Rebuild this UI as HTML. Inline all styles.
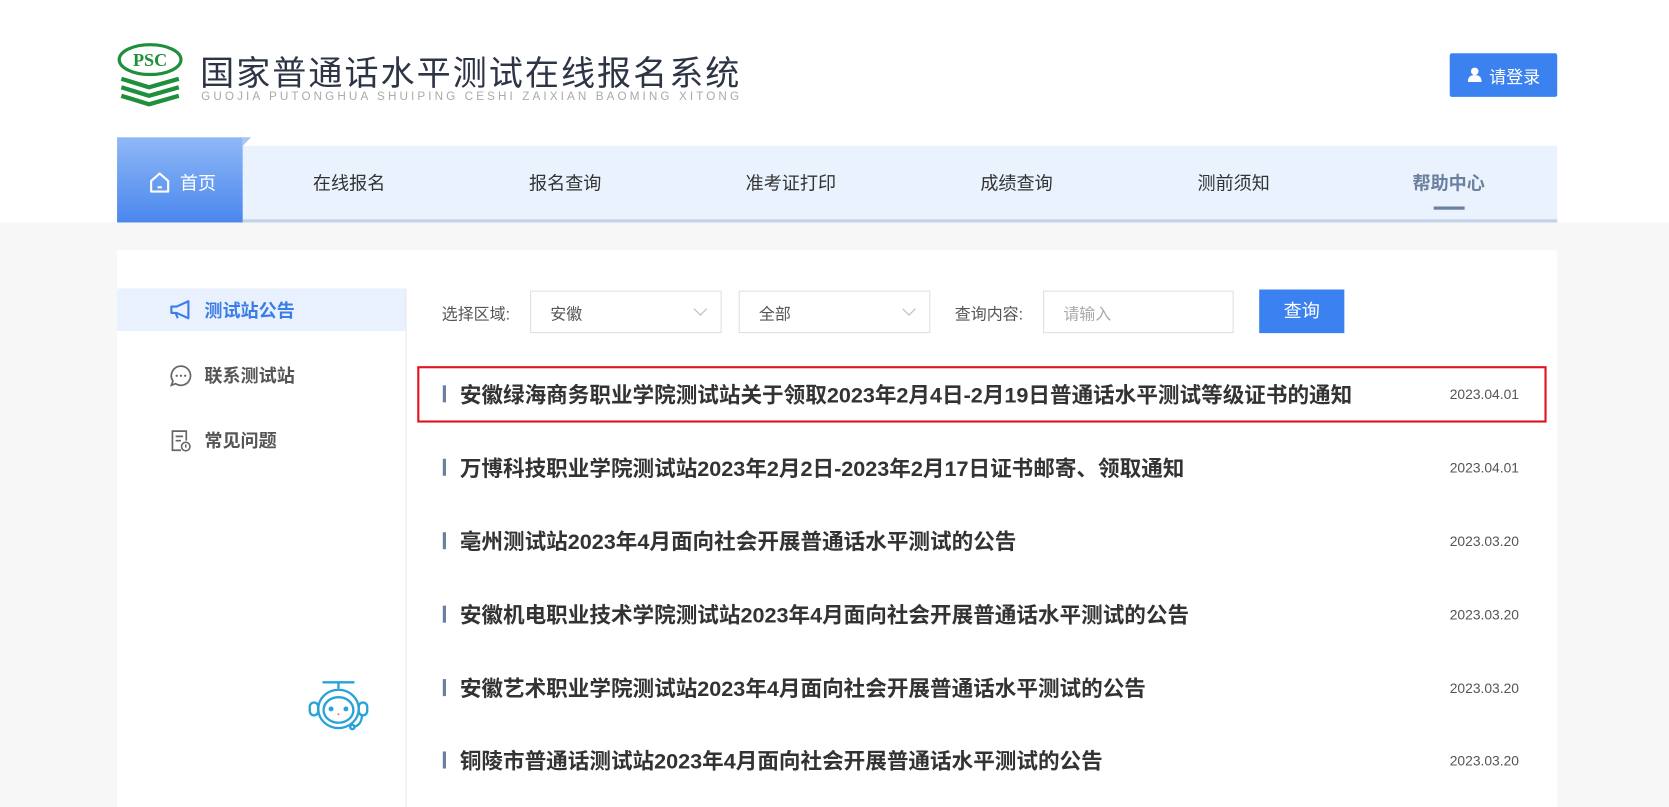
<!DOCTYPE html>
<html><head><meta charset="utf-8"><style>
*{margin:0;padding:0;box-sizing:border-box}
html,body{width:1669px;height:807px;overflow:hidden;background:#fff}
#s{position:absolute;left:0;top:0;width:1568px;height:758px;transform:scale(1.06441);transform-origin:0 0;font-family:"Liberation Sans","Noto Sans CJK SC",sans-serif;}
.a{position:absolute}
.nav span{position:absolute;top:158px;font-size:17px;color:#333;transform:translateX(-50%);white-space:nowrap}
.it{position:absolute;left:416px;width:1030px;height:20px}
.it .b{position:absolute;left:0;top:2px;width:3px;height:16px;background:#6b7fa0}
.it .t{position:absolute;left:16px;top:-6px;font-size:20.3px;font-weight:bold;color:#333;white-space:nowrap}
.it .d{position:absolute;left:946px;top:3px;font-size:13px;color:#555}
.sel{position:absolute;top:273px;height:40px;border:1px solid #dcdfe6;background:#fff;font-size:15px;color:#555;padding:10px 0 0 18px}
</style></head><body><div id="s">
<svg class="a" style="left:110px;top:40px" width="62" height="60" viewBox="0 0 62 60">
<ellipse cx="31" cy="16" rx="29" ry="14" fill="none" stroke="#1e8f3a" stroke-width="3"/>
<text x="31" y="22" text-anchor="middle" font-family="Liberation Serif" font-weight="bold" font-size="17" fill="#1e8f3a">PSC</text>
<g stroke="#1e8f3a" stroke-width="4" fill="none"><path d="M4 34l26 8 28-8M4 42l26 8 28-8M4 50l26 8 28-8"/></g>
</svg>
<div class="a" style="left:188px;top:44px;font-size:32px;color:#2d3446;letter-spacing:1.9px;white-space:nowrap">国家普通话水平测试在线报名系统</div>
<div class="a" style="left:189px;top:85px;font-size:11px;color:#aaa;letter-spacing:2.9px;white-space:nowrap">GUOJIA PUTONGHUA SHUIPING CESHI ZAIXIAN BAOMING XITONG</div>
<div class="a" style="left:1362px;top:50px;width:101px;height:41px;background:#3b82f0;border-radius:2px;color:#fff;font-size:16px;padding:9px 0 0 37px">请登录
<svg class="a" style="left:17px;top:13px" width="13" height="14" viewBox="0 0 13 14"><circle cx="6.5" cy="4" r="3.5" fill="#fff"/><path d="M0 14c0-5 3-6.5 6.5-6.5S13 9 13 14z" fill="#fff"/></svg></div>
<div class="a" style="left:0;top:209px;width:1568px;height:549px;background:#f7f7f7"></div>
<div class="a" style="left:110px;top:137px;width:1353px;height:72px;background:#eaf3fd;border-bottom:3px solid #c3d4ea"></div>
<div class="a" style="left:110px;top:129px;width:118px;height:80px;background:linear-gradient(#8fb8f6,#4a87ee)"></div>
<div class="a" style="left:228px;top:129px;width:0;height:0;border-left:8px solid #a9c7f1;border-bottom:8px solid transparent"></div>
<svg class="a" style="left:140px;top:161px" width="20" height="21" viewBox="0 0 20 21"><path d="M2 9L10 2l8 7v10H2z" fill="none" stroke="#fff" stroke-width="2" stroke-linejoin="round"/><path d="M8 15h4" stroke="#fff" stroke-width="2"/></svg>
<div class="a" style="left:169px;top:158px;font-size:17px;color:#fff">首页</div>
<div class="nav"><span style="left:328px">在线报名</span><span style="left:531px">报名查询</span><span style="left:743px">准考证打印</span><span style="left:955px">成绩查询</span><span style="left:1159px">测前须知</span><span style="left:1361px;font-weight:bold;color:#6b7fa0">帮助中心</span></div>
<div class="a" style="left:1347px;top:194px;width:29px;height:3px;background:#6b7fa0"></div>
<div class="a" style="left:110px;top:235px;width:1353px;height:523px;background:#fff"></div>
<div class="a" style="left:381px;top:271px;width:1px;height:487px;background:#e8e8e8"></div>
<div class="a" style="left:110px;top:271px;width:271px;height:40px;background:#e8f1fd"></div>
<svg class="a" style="left:159px;top:281px" width="22" height="20" viewBox="0 0 22 20"><path d="M2 7h5l11-5v16L7 13H2z" fill="none" stroke="#3b7de8" stroke-width="2" stroke-linejoin="round"/><path d="M6 13l2 5" stroke="#3b7de8" stroke-width="2"/></svg>
<div class="a" style="left:192px;top:278px;font-size:17px;font-weight:bold;color:#3b7de8">测试站公告</div>
<svg class="a" style="left:159px;top:342px" width="22" height="22" viewBox="0 0 22 22"><path d="M11 2a9 9 0 1 1-5 16.5L2 20l1.5-4A9 9 0 0 1 11 2z" fill="none" stroke="#666" stroke-width="1.6"/><circle cx="7" cy="11" r="1.1" fill="#666"/><circle cx="11" cy="11" r="1.1" fill="#666"/><circle cx="15" cy="11" r="1.1" fill="#666"/></svg>
<div class="a" style="left:192px;top:339px;font-size:17px;font-weight:bold;color:#555">联系测试站</div>
<svg class="a" style="left:160px;top:403px" width="20" height="22" viewBox="0 0 20 22"><path d="M10 20H2V2h13v9" fill="none" stroke="#666" stroke-width="1.6"/><path d="M5 7h7M5 11h5" stroke="#666" stroke-width="1.6"/><circle cx="14.5" cy="16.5" r="4" fill="none" stroke="#666" stroke-width="1.5"/><path d="M14.5 14.5v3" stroke="#666" stroke-width="1.4"/></svg>
<div class="a" style="left:192px;top:400px;font-size:17px;font-weight:bold;color:#555">常见问题</div>
<svg class="a" style="left:287px;top:638px" width="62" height="52" viewBox="0 0 62 52"><g fill="none" stroke="#28a3d8" stroke-width="2.2"><path d="M16 3h30M31 3v6"/><ellipse cx="31" cy="28" rx="19" ry="18"/><ellipse cx="31" cy="29" rx="14" ry="12"/><rect x="4" y="22" width="8" height="12" rx="4"/><rect x="50" y="22" width="8" height="12" rx="4"/><path d="M53 34c0 6-3 10-8 11"/><circle cx="44" cy="45" r="2"/></g><circle cx="24" cy="28" r="2.3" fill="#28a3d8"/><circle cx="38" cy="28" r="2.3" fill="#28a3d8"/><circle cx="31" cy="33" r="0.9" fill="#e66"/></svg>
<div class="a" style="left:415px;top:284px;font-size:15px;color:#555">选择区域:</div>
<div class="sel" style="left:498px;width:180px">安徽</div>
<div class="sel" style="left:694px;width:180px">全部</div>
<svg class="a" style="left:651px;top:289px" width="14" height="8"><path d="M1 1l6 6 6-6" fill="none" stroke="#c0c4cc" stroke-width="1.2"/></svg>
<svg class="a" style="left:847px;top:289px" width="14" height="8"><path d="M1 1l6 6 6-6" fill="none" stroke="#c0c4cc" stroke-width="1.2"/></svg>
<div class="a" style="left:897px;top:284px;font-size:15px;color:#555">查询内容:</div>
<div class="sel" style="left:980px;width:179px;color:#aaa">请输入</div>
<div class="a" style="left:1183px;top:272px;width:80px;height:41px;background:#3b82f0;color:#fff;font-size:17px;text-align:center;line-height:41px">查询</div>
<div class="a" style="left:392px;top:344px;width:1061px;height:53px;border:2px solid #e0141e"></div>
<div class="it" style="top:360px"><i class="b"></i><span class="t">安徽绿海商务职业学院测试站关于领取2023年2月4日-2月19日普通话水平测试等级证书的通知</span><span class="d">2023.04.01</span></div>
<div class="it" style="top:429px"><i class="b"></i><span class="t">万博科技职业学院测试站2023年2月2日-2023年2月17日证书邮寄、领取通知</span><span class="d">2023.04.01</span></div>
<div class="it" style="top:498px"><i class="b"></i><span class="t">亳州测试站2023年4月面向社会开展普通话水平测试的公告</span><span class="d">2023.03.20</span></div>
<div class="it" style="top:567px"><i class="b"></i><span class="t">安徽机电职业技术学院测试站2023年4月面向社会开展普通话水平测试的公告</span><span class="d">2023.03.20</span></div>
<div class="it" style="top:636px"><i class="b"></i><span class="t">安徽艺术职业学院测试站2023年4月面向社会开展普通话水平测试的公告</span><span class="d">2023.03.20</span></div>
<div class="it" style="top:704px"><i class="b"></i><span class="t">铜陵市普通话测试站2023年4月面向社会开展普通话水平测试的公告</span><span class="d">2023.03.20</span></div>
</div></body></html>
